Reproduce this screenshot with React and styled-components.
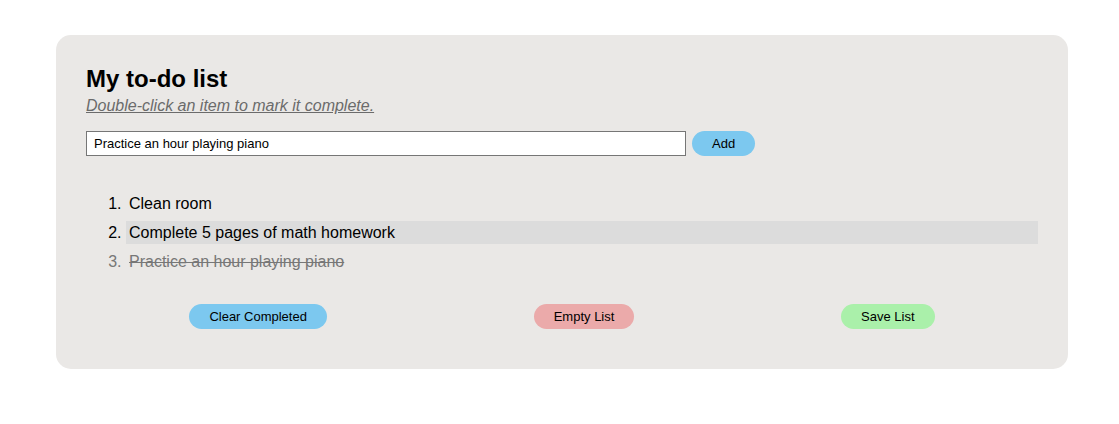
import React, { useState } from 'react';
import styled, { createGlobalStyle } from 'styled-components';

const GlobalStyle = createGlobalStyle`
  body {
    margin: 0;
    background: #ffffff;
    font-family: "Liberation Sans", Arial, sans-serif;
  }
`;

const Card = styled.div`
  margin: 35px 51px 0 56px;
  padding: 30px 30px 40px 30px;
  background-color: #eae8e6;
  border-radius: 15px;
`;

const Title = styled.h1`
  margin: 0;
  font-size: 24px;
  font-weight: bold;
  line-height: 27.6px;
  color: #000;
`;

const Hint = styled.p`
  margin: 4px 0 0 0;
  font-size: 16px;
  font-style: italic;
  text-decoration: underline;
  color: #6b6b6b;
`;

const InputRow = styled.div`
  display: flex;
  align-items: center;
  gap: 6px;
  margin-top: 16px;
`;

const TextInput = styled.input`
  box-sizing: border-box;
  width: 600px;
  height: 25px;
  padding: 0 7px;
  border: 1px solid #767676;
  border-radius: 0;
  font-family: "Liberation Sans", Arial, sans-serif;
  font-size: 13px;
  color: #000;
  background: #fff;
  outline: none;
`;

const PillButton = styled.button`
  height: 25px;
  padding: 0 20px;
  border: none;
  border-radius: 13px;
  font-family: "Liberation Sans", Arial, sans-serif;
  font-size: 13px;
  color: #000;
  cursor: pointer;
  background-color: ${({ tone }) =>
    tone === 'pink' ? '#ebaaaa' : tone === 'green' ? '#aaf0aa' : '#7cc8ef'};
`;

const List = styled.ol`
  margin: 36px 0 0 0;
  padding-left: 40px;
  display: flex;
  flex-direction: column;
  gap: 6px;
`;

const Item = styled.li`
  padding: 2px 3px;
  line-height: 19px;
  font-size: 16px;
  color: ${({ done }) => (done ? '#777777' : '#000')};
  text-decoration: ${({ done }) => (done ? 'line-through' : 'none')};
  background-color: ${({ hovered }) => (hovered ? '#dcdcdc' : 'transparent')};
  cursor: pointer;
  user-select: none;
`;

const Actions = styled.div`
  display: flex;
  justify-content: space-around;
  margin-top: 31px;
`;

const App = () => {
  const [text, setText] = useState('Practice an hour playing piano');
  const [items, setItems] = useState([
    { text: 'Clean room', done: false },
    { text: 'Complete 5 pages of math homework', done: false },
    { text: 'Practice an hour playing piano', done: true },
  ]);
  const [hover, setHover] = useState(1);

  const addItem = () => {
    if (!text.trim()) return;
    setItems([...items, { text, done: false }]);
    setText('');
  };

  const toggle = (index) => {
    const updated = [...items];
    updated[index] = { ...updated[index], done: !updated[index].done };
    setItems(updated);
  };

  return (
    <>
      <GlobalStyle />
      <Card>
        <Title>My to-do list</Title>
        <Hint>Double-click an item to mark it complete.</Hint>
        <InputRow>
          <TextInput value={text} onChange={(e) => setText(e.target.value)} />
          <PillButton onClick={addItem}>Add</PillButton>
        </InputRow>
        <List>
          {items.map((item, index) => (
            <Item
              key={index}
              done={item.done}
              hovered={hover === index}
              onMouseEnter={() => setHover(index)}
              onDoubleClick={() => toggle(index)}
            >
              {item.text}
            </Item>
          ))}
        </List>
        <Actions>
          <PillButton onClick={() => setItems(items.filter((i) => !i.done))}>
            Clear Completed
          </PillButton>
          <PillButton tone="pink" onClick={() => setItems([])}>
            Empty List
          </PillButton>
          <PillButton tone="green">Save List</PillButton>
        </Actions>
      </Card>
    </>
  );
};

export default App;
